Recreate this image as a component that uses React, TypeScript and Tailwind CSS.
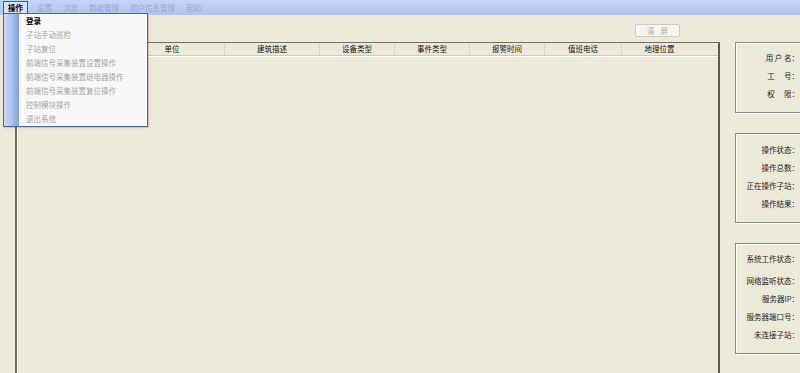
import React from "react"

const font = { fontFamily: '"Noto Sans CJK SC", "Noto Sans", sans-serif' }

const menus = ["设置", "浏览", "数据管理", "用户信息管理", "帮助"]

const dropItems = [
  "子站手动巡检",
  "子站复位",
  "前端信号采集装置设置操作",
  "前端信号采集装置继电器操作",
  "前端信号采集装置复位操作",
  "控制模块操作",
  "退出系统",
]

const columns = [
  { label: "", w: "w-[103px]" },
  { label: "单位", w: "w-[105px]" },
  { label: "建筑描述", w: "w-[95px]" },
  { label: "设备类型", w: "w-[75px]" },
  { label: "事件类型", w: "w-[75px]" },
  { label: "报警时间", w: "w-[75px]" },
  { label: "值班电话", w: "w-[77px]" },
  { label: "地理位置", w: "w-[75px]" },
]

const Panel = ({ rows, h, pt }: { rows: { t: string; gap?: boolean }[]; h: string; pt: string }) => (
  <div className={`${h} w-[90px] border border-[#8d8b7d] shadow-[inset_1px_1px_0_#fff,1px_1px_0_#fff]`}>
    <div className={`${pt} w-[63px]`}>
      {rows.map((r) => (
        <div
          key={r.t}
          className={`h-[18px] leading-[18px] text-right text-[7.5px] text-[#1a1a1a] whitespace-nowrap ${r.gap ? "mb-[4px]" : ""}`}
        >
          {r.t}
        </div>
      ))}
    </div>
  </div>
)

export default function App() {
  return (
    <div className="relative w-[800px] h-[373px] overflow-hidden bg-[#ece9d8]" style={font}>
      {/* menu bar */}
      <div className="h-[15px] flex items-center bg-gradient-to-b from-[#c4d6fa] to-[#aec4f0] text-[7.5px]">
        <div className="ml-[3px] h-[13px] px-[4px] flex items-center border border-[#3b5a9a] bg-[#d5e2fa] text-black font-bold">
          操作
        </div>
        <div className="flex gap-[11px] ml-[9px] text-[#9aa9c7]">
          {menus.map((m) => (
            <span key={m}>{m}</span>
          ))}
        </div>
      </div>

      <div className="flex h-[358px]">
        <div className="w-[15px] shrink-0" />

        {/* center */}
        <div className="w-[705px] shrink-0 flex flex-col">
          <div className="h-[27px] flex justify-end pr-[40px] pt-[9px]">
            <div className="w-[45px] h-[13px] flex items-center justify-center gap-[6px] border border-[#cdcbbd] rounded-[2px] bg-[#f5f4ee] text-[7.5px] text-[#b3b1a3]">
              <span>清</span>
              <span>屏</span>
            </div>
          </div>
          <div className="flex-1 border-l-2 border-t border-r-2 border-[#716f64] border-r-[#5f5d52] shadow-[inset_1px_0_0_#fff]">
            <div className="h-[13px] flex border-b border-[#cfcbba] shadow-[0_1px_0_#fff]">
              {columns.map((c, i) => (
                <div
                  key={i}
                  className={`${c.w} h-full flex items-center justify-center text-[7.5px] text-[#111] ${
                    i < columns.length - 1 ? "border-r border-[#d8d4c3]" : ""
                  }`}
                >
                  {c.label}
                </div>
              ))}
              <div className="flex-1" />
            </div>
          </div>
        </div>

        {/* right panels */}
        <div className="ml-[15px] shrink-0 pt-[27px] flex flex-col gap-[20px]">
          <Panel
            h="h-[71px]"
            pt="pt-[6px]"
            rows={[{ t: "用 户 名：" }, { t: "工　  号：" }, { t: "权　  限：" }]}
          />
          <Panel
            h="h-[90px]"
            pt="pt-[7px]"
            rows={[{ t: "操作状态：" }, { t: "操作总数：" }, { t: "正在操作子站：" }, { t: "操作结果：" }]}
          />
          <Panel
            h="h-[111px]"
            pt="pt-[6px]"
            rows={[
              { t: "系统工作状态：", gap: true },
              { t: "网络监听状态：" },
              { t: "服务器IP：" },
              { t: "服务器端口号：" },
              { t: "未连接子站：" },
            ]}
          />
        </div>
      </div>

      {/* dropdown menu */}
      <div className="absolute left-[3px] top-[13px] w-[145px] h-[114px] flex border border-[#4a679f] bg-[#f8f8f8] shadow-[1px_1px_1px_rgba(0,0,0,0.15)]">
        <div className="w-[15px] h-full bg-gradient-to-r from-[#c9daf9] via-[#a9c2f0] to-[#7d9fdc]" />
        <div className="flex-1 pl-[7px] text-[7.5px]">
          <div className="h-[14px] leading-[14px] font-bold text-black">登录</div>
          {dropItems.map((d) => (
            <div key={d} className="h-[14px] leading-[14px] text-[#a5a5a5]">
              {d}
            </div>
          ))}
        </div>
      </div>
    </div>
  )
}
